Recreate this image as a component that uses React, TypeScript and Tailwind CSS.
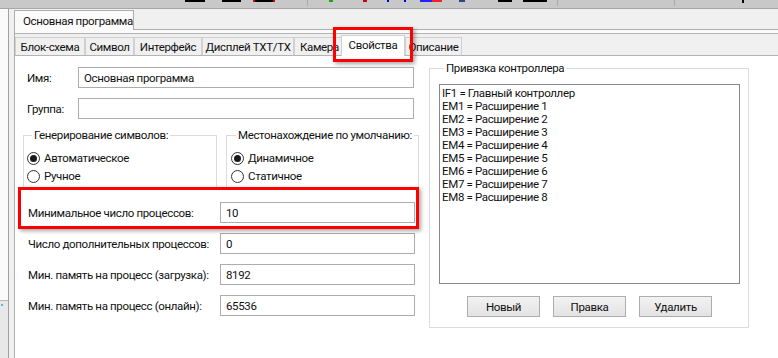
import React from 'react'

const innerTabs = [
  { label: 'Блок-схема', w: 'w-[70px]' },
  { label: 'Символ', w: 'w-[49px]' },
  { label: 'Интерфейс', w: 'w-[68px]' },
  { label: 'Дисплей TXT/TX', w: 'w-[92px]' },
]

const bindings = [
  'IF1 = Главный контроллер',
  'EM1 = Расширение 1',
  'EM2 = Расширение 2',
  'EM3 = Расширение 3',
  'EM4 = Расширение 4',
  'EM5 = Расширение 5',
  'EM6 = Расширение 6',
  'EM7 = Расширение 7',
  'EM8 = Расширение 8',
]

function Radio({ checked, label }: { checked?: boolean; label: string }) {
  return (
    <div className="flex h-[18px] items-center">
      <span className="flex h-[13px] w-[13px] items-center justify-center rounded-full border border-[#333] bg-white">
        {checked && <span className="h-[7px] w-[7px] rounded-full bg-[#1a1a1a]" />}
      </span>
      <span className="ml-[4px]">{label}</span>
    </div>
  )
}

function Field({ value, w }: { value: string; w: string }) {
  return (
    <div className={`flex h-[21px] ${w} items-center border border-[#adadad] bg-white pl-[5px]`}>
      {value}
    </div>
  )
}

function Btn({ label }: { label: string }) {
  return (
    <div className="flex h-[21px] w-[73px] items-center justify-center border border-[#adadad] bg-gradient-to-b from-[#f2f2f2] to-[#e3e3e3]">
      {label}
    </div>
  )
}

export default function App() {
  return (
    <div
      className="relative h-[358px] w-[778px] overflow-hidden whitespace-nowrap bg-[#f0f0f0] text-[11.5px] leading-[14px] tracking-[-0.35px] text-[#111]"
      style={{ fontFamily: 'Roboto, "Liberation Sans", sans-serif' }}
    >
      {/* toolbar remnants */}
      <div className="flex h-[9px] items-start border-b border-[#a6a6a6] bg-[#c8c8c8]">
        <span className="ml-[185px] h-[2px] w-[20px] bg-black" />
        <span className="ml-[17px] h-[2px] w-[19px] bg-black" />
        <span className="ml-[12px] h-[2px] w-[2px] bg-[#d00]" />
        <span className="h-[2px] w-[18px] bg-black" />
        <span className="h-[2px] w-[2px] bg-[#d00]" />
        <span className="ml-[32px] h-[6px] w-px bg-[#aaa]" />
        <span className="ml-[21px] h-[2px] w-[4px] bg-[#1a1]" />
        <span className="ml-[30px] h-[2px] w-[4px] bg-[#c00]" />
        <span className="ml-[20px] h-[2px] w-[2px] bg-[#00c]" />
        <span className="ml-[15px] h-[2px] w-[2px] bg-[#00c]" />
        <span className="ml-[14px] h-[2px] w-[12px] bg-[#22f]" />
        <span className="h-[2px] w-[10px] bg-[#e22]" />
        <span className="ml-[17px] h-[2px] w-[6px] bg-[#2a4a7a]" />
        <span className="ml-[33px] h-[2px] w-[14px] bg-black" />
        <span className="ml-[11px] h-[2px] w-[24px] bg-black" />
        <span className="ml-[10px] h-[6px] w-px bg-[#aaa]" />
        <span className="ml-[116px] h-[6px] w-px bg-[#aaa]" />
        <span className="ml-[67px] h-[3px] w-[2px] bg-black" />
      </div>

      <div className="flex h-[349px]">
        {/* left panel edge */}
        <div className="flex w-[9px] flex-col border-r border-[#a0a0a0]">
          <div className="h-[292px] border-b border-[#b8b8b8] bg-[#fafafa]" />
          <div className="flex-1 bg-[#e8e8e8] pl-[1px] pt-[3px]">
            <div className="h-[2px] w-[2px] bg-[#5bc]" />
          </div>
        </div>

        <div className="flex flex-1 flex-col">
          {/* outer tab strip */}
          <div className="flex h-[21px] items-end">
            <div className="w-[5px]" />
            <div className="flex h-[20px] w-[120px] items-center border-x border-t border-[#adadad] bg-[#fbfbfb] pl-[8px]">
              Основная программа
            </div>
            <div className="h-full flex-1 border-b border-[#adadad]" />
          </div>

          <div className="ml-[5px] flex flex-1 flex-col border-l border-[#adadad]">
            <div className="h-[3px] bg-[#fbfbfb]" />
            {/* inner tab strip */}
            <div className="flex h-[23px] items-end border-y border-[#b4b4b4] bg-[#f0f0f0]">
              {innerTabs.map((t) => (
                <div
                  key={t.label}
                  className={`flex h-[18px] ${t.w} items-center justify-center border-x border-t border-[#d0d0d0]`}
                >
                  {t.label}
                </div>
              ))}
              <div className="flex h-[18px] w-[50px] items-center border-x border-t border-[#d0d0d0] pl-[5px]">
                Камера
              </div>
              <div className="relative z-10 -mb-px ml-[-3px] flex h-[21px] w-[64px] items-center justify-center border-x border-t border-[#d0d0d0] bg-white pb-[2px]">
                Свойства
              </div>
              <div className="flex h-[18px] w-[57px] items-center justify-center border-x border-t border-[#d0d0d0]">
                Описание
              </div>
            </div>

            {/* page content */}
            <div className="flex flex-1 bg-white">
              <div className="flex w-[405px] flex-col pt-[11px]">
                <div className="flex items-center pl-[12px]">
                  <span className="w-[51px]">Имя:</span>
                  <Field value="Основная программа" w="w-[336px]" />
                </div>
                <div className="mt-[10px] flex items-center pl-[12px]">
                  <span className="w-[51px]">Группа:</span>
                  <Field value="" w="w-[336px]" />
                </div>

                <div className="ml-[8px] mt-[9px] flex gap-[9px]">
                  <fieldset className="h-[62px] w-[194px] border border-[#dcdcdc] pl-[3px]">
                    <legend className="ml-[5px] px-[2px] leading-[14px]">Генерирование символов:</legend>
                    <div className="mt-[7px]">
                      <Radio checked label="Автоматическое" />
                      <Radio label="Ручное" />
                    </div>
                  </fieldset>
                  <fieldset className="h-[62px] w-[193px] border border-[#dcdcdc] pl-[4px]">
                    <legend className="ml-[5px] px-[2px] leading-[14px]">Местонахождение по умолчанию:</legend>
                    <div className="mt-[7px]">
                      <Radio checked label="Динамичное" />
                      <Radio label="Статичное" />
                    </div>
                  </fieldset>
                </div>

                <div className="relative z-10 ml-[3px] mt-[-3px] flex w-[401px] items-center border-[3px] border-[#ff0000] pb-[3px] pl-[7px] pt-[12px] shadow-[2px_2px_4px_rgba(0,0,0,0.35)]">
                  <span className="w-[192px]">Минимальное число процессов:</span>
                  <Field value="10" w="w-[195px]" />
                </div>

                <div className="mt-[4px] flex flex-col gap-[10px] pl-[13px]">
                  {[
                    ['Число дополнительных процессов:', '0'],
                    ['Мин. память на процесс (загрузка):', '8192'],
                    ['Мин. память на процесс (онлайн):', '65536'],
                  ].map(([l, v]) => (
                    <div key={l} className="flex items-center">
                      <span className="w-[192px]">{l}</span>
                      <Field value={v} w="w-[195px]" />
                    </div>
                  ))}
                </div>
              </div>

              <div className="ml-[9px] pt-[5px]">
                <fieldset className="w-[320px] border border-[#dcdcdc] pb-[10px] pl-[9px]">
                  <legend className="ml-[5px] px-[2px] leading-[14px]">Привязка контроллера</legend>
                  <div className="mt-[9px] h-[200px] w-[301px] border border-[#828790] bg-white pl-[2px] pt-[2px] leading-[13px]">
                    {bindings.map((b) => (
                      <div key={b}>{b}</div>
                    ))}
                  </div>
                  <div className="mt-[12px] flex w-[301px] justify-center gap-[13px]">
                    <Btn label="Новый" />
                    <Btn label="Правка" />
                    <Btn label="Удалить" />
                  </div>
                </fieldset>
              </div>
            </div>
          </div>
        </div>
      </div>

      {/* annotation frame around the selected tab */}
      <div className="absolute left-[333px] top-[27px] h-[35px] w-[80px] border-[3px] border-[#ff0000] shadow-[2px_2px_4px_rgba(0,0,0,0.35)]" />
    </div>
  )
}
